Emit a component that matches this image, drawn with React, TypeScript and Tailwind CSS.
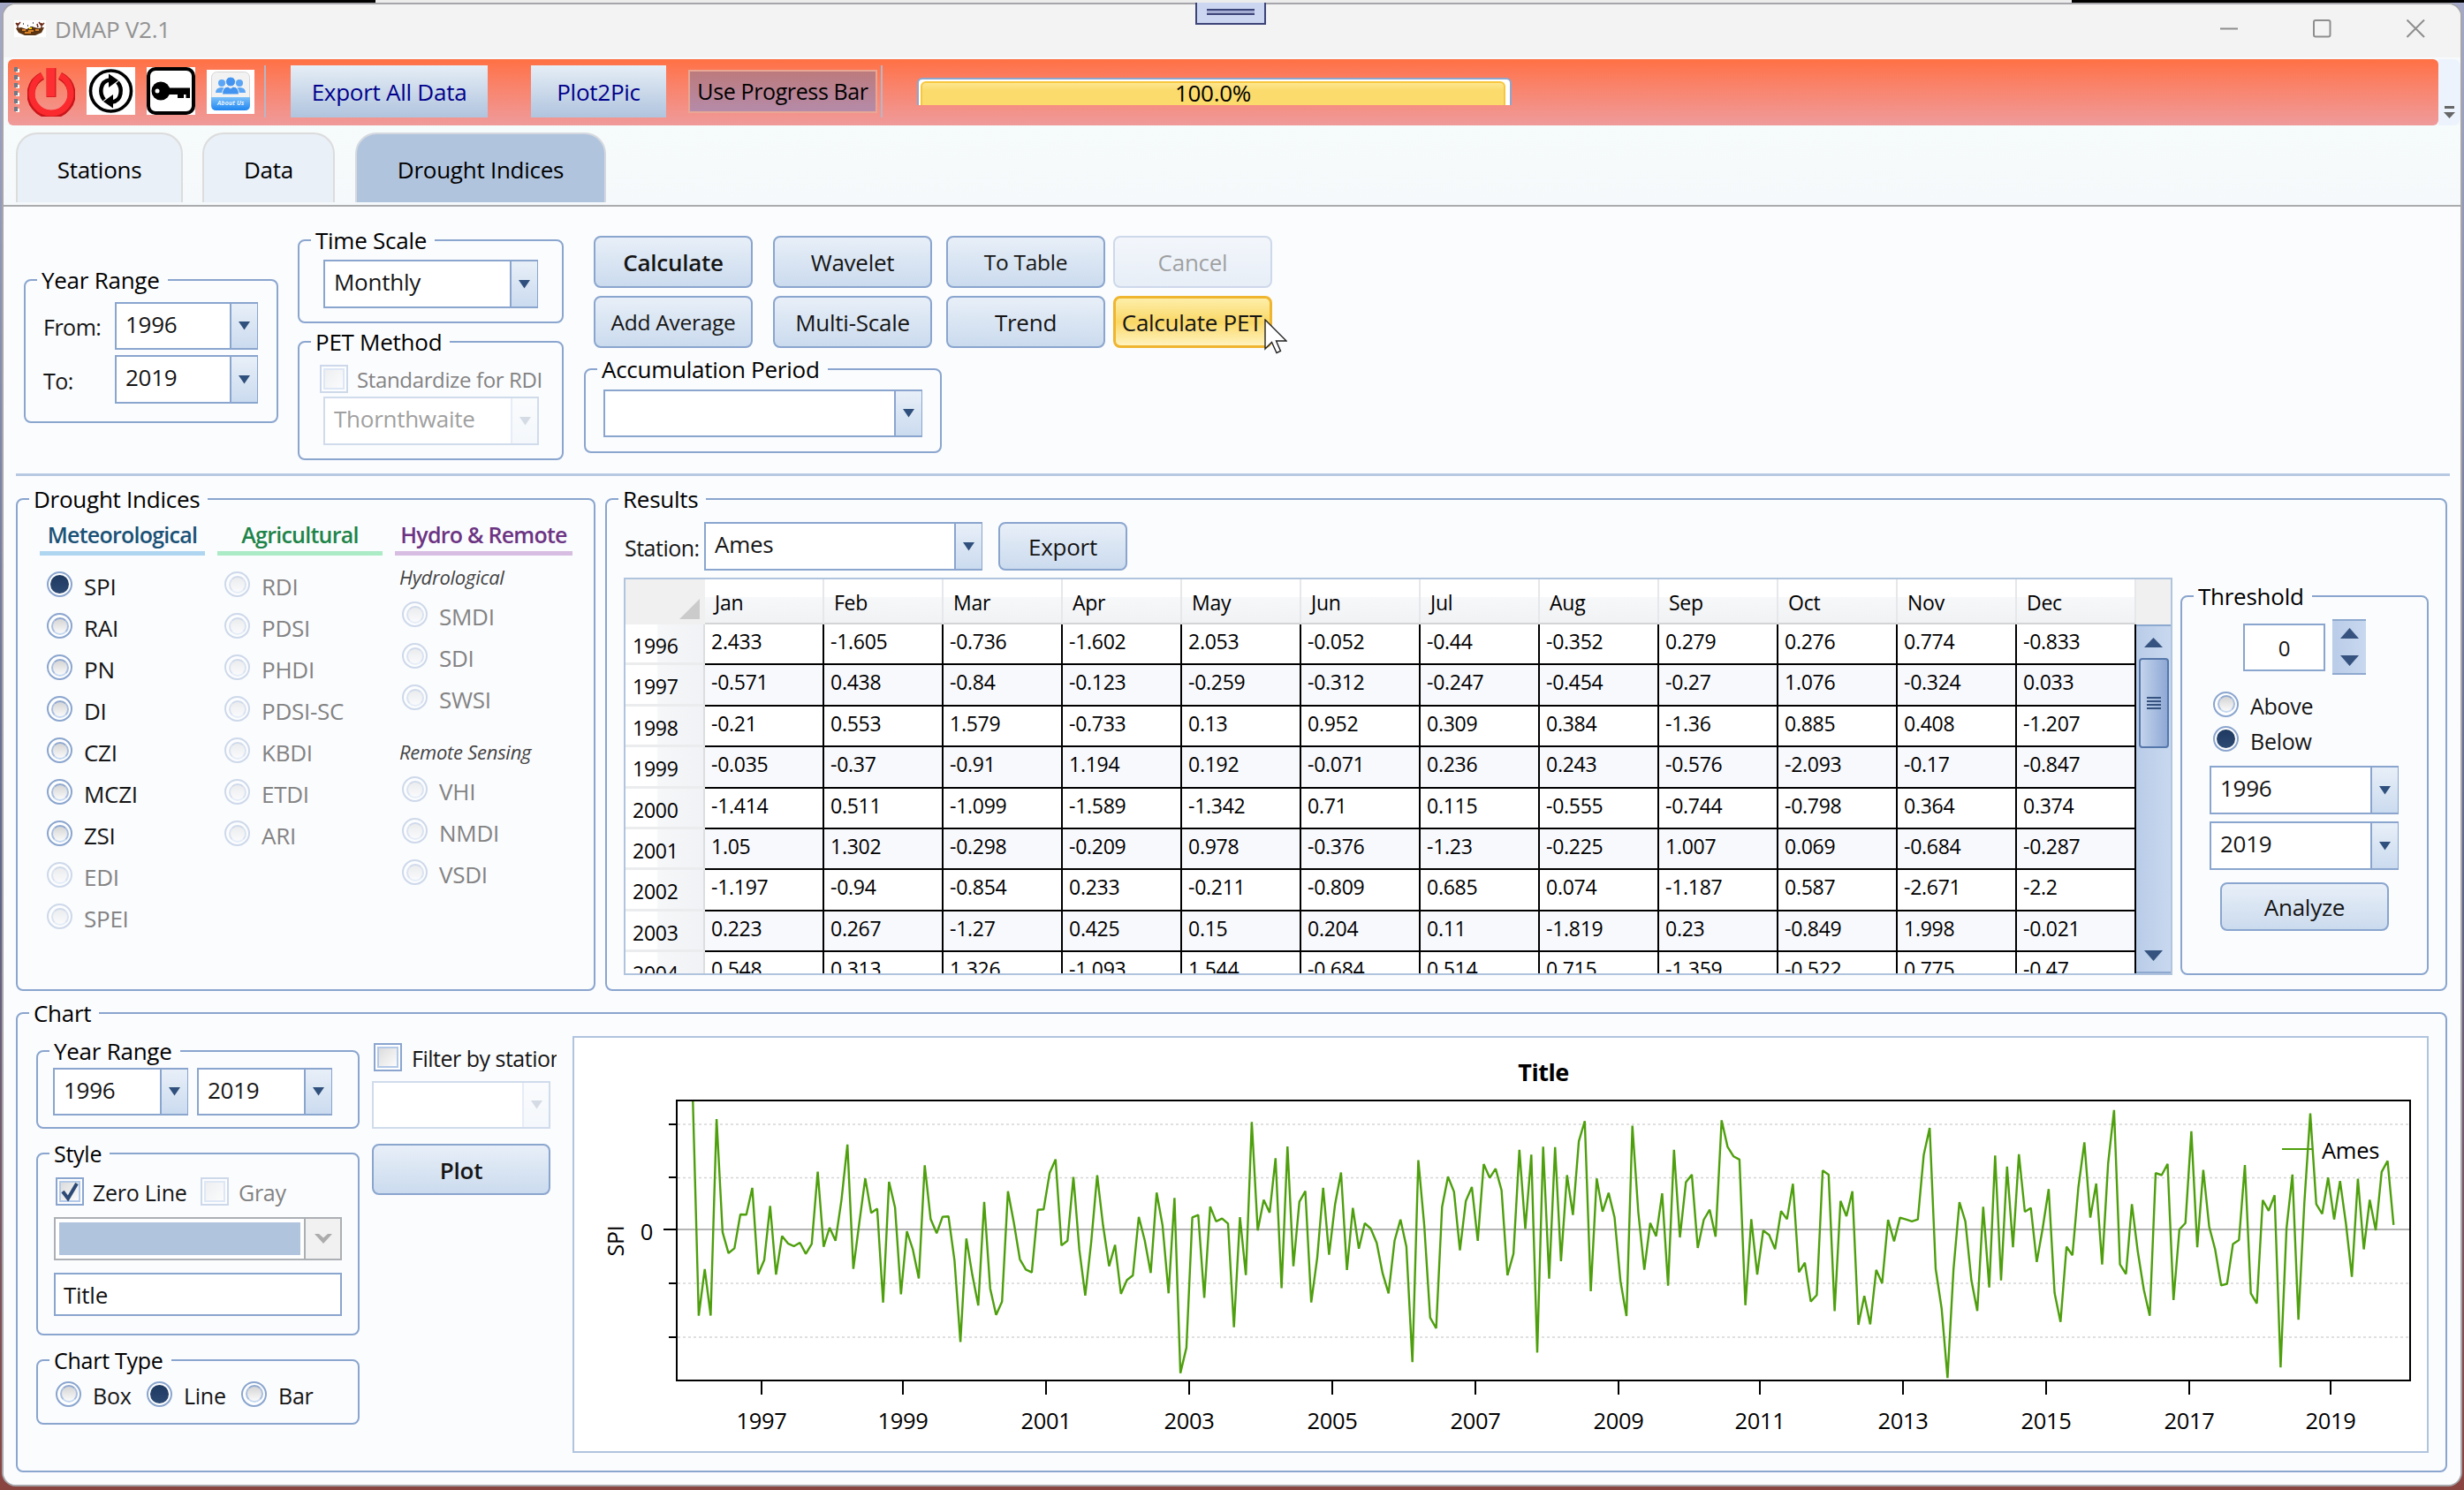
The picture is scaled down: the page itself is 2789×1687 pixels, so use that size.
import type { ReactNode } from 'react';

const months = ['Jan', 'Feb', 'Mar', 'Apr', 'May', 'Jun', 'Jul', 'Aug', 'Sep', 'Oct', 'Nov', 'Dec'];

const rows = [
    { year: 1996, values: [2.433, -1.605, -0.736, -1.602, 2.053, -0.052, -0.44, -0.352, 0.279, 0.276, 0.774, -0.833] },
    { year: 1997, values: [-0.571, 0.438, -0.84, -0.123, -0.259, -0.312, -0.247, -0.454, -0.27, 1.076, -0.324, 0.033] },
    { year: 1998, values: [-0.21, 0.553, 1.579, -0.733, 0.13, 0.952, 0.309, 0.384, -1.36, 0.885, 0.408, -1.207] },
    { year: 1999, values: [-0.035, -0.37, -0.91, 1.194, 0.192, -0.071, 0.236, 0.243, -0.576, -2.093, -0.17, -0.847] },
    { year: 2000, values: [-1.414, 0.511, -1.099, -1.589, -1.342, 0.71, 0.115, -0.555, -0.744, -0.798, 0.364, 0.374] },
    { year: 2001, values: [1.05, 1.302, -0.298, -0.209, 0.978, -0.376, -1.23, -0.225, 1.007, 0.069, -0.684, -0.287] },
    { year: 2002, values: [-1.197, -0.94, -0.854, 0.233, -0.211, -0.809, 0.685, 0.074, -1.187, 0.587, -2.671, -2.2] },
    { year: 2003, values: [0.223, 0.267, -1.27, 0.425, 0.15, 0.204, 0.11, -1.819, 0.23, -0.849, 1.998, -0.021] },
    { year: 2004, values: [0.548, 0.313, 1.326, -1.093, 1.544, -0.684, 0.514, 0.715, -1.359, -0.522, 0.775, -0.47] },
];

// 2005 onwards, only shown on the chart
const laterValues = [
    0.46, 1.06, -0.756, 0.4, -0.356, 0.115, 0.016, -0.25, -0.816, -1.19, -0.21, 0.186,
    -0.32, -2.47, 1.29, 0.08, -1.64, -1.84, 0.42, 0.98, 0.7, -0.39, 0.53, 0.79,
    -0.21, 1.216, 0.96, 1.13, 0.73, -0.854, -0.45, 1.48, 0.01, 1.39, -2.29, 1.54,
    -0.915, 1.53, -0.59, 1.01, 0.27, 1.64, 2.015, -1.15, 0.95, 0.33, 0.68, 0.225,
    -0.96, -1.61, 1.93, 0.32, -0.75, 0.12, -0.126, 0.67, -1.046, 1.48, -0.148, 0.88,
    1.02, -0.345, 0.18, 0.367, -0.137, 2.03, 1.54, 1.36, 1.3, -1.41, 0.19, -0.838,
    -0.02, -0.104, -0.367, 0.34, 0.19, 0.85, -0.794, -0.62, -1.34, -1.22, 1.095, 1.02,
    -1.52, 0.53, 0.247, 0.71, -1.775, -1.236, -1.764, -0.753, -1.0, 0.18, -0.22, 0.22,
    0.185, 0.15, 0.185, 1.39, 1.89, -0.736, -1.466, -2.764, -0.736, 0.51, 0.15, -0.944,
    -1.517, 0.42, -1.08, 1.376, -0.95, 1.17, -0.33, 1.4, 0.33, 0.4, -0.607, 0.02,
    0.753, -1.185, -1.72, -0.32, -0.48, 0.78, 1.62, 0.22, 0.854, -0.65, 1.23, 2.22,
    -0.65, -0.83, 0.47, -0.416, -1.12, -1.607, 1.05, 1.01, 1.22, -1.315, 0, 0.12,
    1.826, -0.33, 1.107, 0.05, -0.37, -1.04, -1.01, -0.27, -0.197, 1.197, -1.19, -1.376,
    0.545, 0.348, 0.635, -2.567, 0.02, 1.02, -1.68, 0.5, 2.157, 0.47, 0.29, 0.966,
    0.185, 0.9, 0.107, -0.88, 0.944, -0.37, 0.55, -0.017, 1.07, 1.275, 0.084,
];

const series = [...rows.flatMap((r) => r.values), ...laterValues];

const xTicks = [
    { year: 1997, x: 862 },
    { year: 1999, x: 1022 },
    { year: 2001, x: 1184 },
    { year: 2003, x: 1346 },
    { year: 2005, x: 1508 },
    { year: 2007, x: 1670 },
    { year: 2009, x: 1832 },
    { year: 2011, x: 1992 },
    { year: 2013, x: 2154 },
    { year: 2015, x: 2316 },
    { year: 2017, x: 2478 },
    { year: 2019, x: 2638 },
];

const meteorological = ['SPI', 'RAI', 'PN', 'DI', 'CZI', 'MCZI', 'ZSI', 'EDI', 'SPEI'];
const agricultural = ['RDI', 'PDSI', 'PHDI', 'PDSI-SC', 'KBDI', 'ETDI', 'ARI'];

function Group({ title, className, children }: { title: string; className: string; children: ReactNode }) {
    return (
        <div className={`relative shrink-0 rounded-lg border-2 border-[#8aa5ce] ${className}`}>
            <div className="absolute -top-[18px] left-[13px] bg-[#fbfcfe] pl-[5px] pr-[9px] h-[34px] leading-[34px] whitespace-nowrap text-black">
                {title}
            </div>
            {children}
        </div>
    );
}

function Combo({ value, className, disabled }: { value?: string; className: string; disabled?: boolean }) {
    return (
        <div className={`flex shrink-0 border-2 bg-white ${disabled ? 'border-[#d0dbeb] text-[#a0a0a0]' : 'border-[#8aa5ce]'} ${className}`}>
            <div className="flex-1 pl-[10px] leading-[46px] whitespace-nowrap">{value}</div>
            <div className={`w-[31px] -mr-[1px] flex items-center justify-center border-l-2 border-[#8aa5ce] bg-linear-to-b from-[#e8eff8] to-[#cbdbef] ${disabled ? 'opacity-20' : ''}`}>
                <svg width="13" height="10" viewBox="0 0 13 10">
                    <path d="M0 0H13L6.5 9.5Z" fill="#2f4f7c" />
                </svg>
            </div>
        </div>
    );
}

function Button({ children, className }: { children: ReactNode; className: string }) {
    return (
        <div className={`flex shrink-0 items-center justify-center rounded-lg border-2 border-[#8aa5ce] bg-linear-to-b from-[#e8eff8] to-[#cbdbee] pt-[2px] whitespace-nowrap ${className}`}>
            {children}
        </div>
    );
}

function RadioDot({ checked, disabled }: { checked?: boolean; disabled?: boolean }) {
    return (
        <span className={`flex size-[29px] shrink-0 items-center justify-center rounded-full border-2 border-[#8aa5ce] bg-white ${disabled ? 'opacity-40' : ''}`}>
            {checked ? (
                <span className="size-[21px] rounded-full bg-linear-to-b from-[#1f3a61] to-[#2d4a73]" />
            ) : (
                <span className="size-[20px] rounded-full border-2 border-t-[#8fa8d0] border-x-[#a9bee0] border-b-[#c5d8f0] bg-linear-to-b from-[#d5d5d5] to-[#fafafa]" />
            )}
        </span>
    );
}

function Radio({ label, checked, disabled, className }: { label: string; checked?: boolean; disabled?: boolean; className: string }) {
    return (
        <div className={`flex items-center gap-[13px] ${className}`}>
            <RadioDot checked={checked} disabled={disabled} />
            <span className={`pt-[4px] leading-[32px] whitespace-nowrap ${disabled ? 'text-[#838383]' : ''}`}>{label}</span>
        </div>
    );
}

function CheckBox({ checked, disabled }: { checked?: boolean; disabled?: boolean }) {
    return (
        <span className={`flex size-[32px] shrink-0 items-center justify-center border-2 border-[#8aa5ce] bg-white ${disabled ? 'opacity-40' : ''}`}>
            <span className="flex size-[24px] items-center justify-center border-2 border-[#b3c9e8] bg-linear-to-br from-[#dcdcdc] to-[#fcfcfc]">
                {checked && (
                    <svg width="20" height="22" viewBox="0 0 20 22" className="shrink-0">
                        <path d="M2 11L8 19L18 2" fill="none" stroke="#2c4a75" strokeWidth="4" />
                    </svg>
                )}
            </span>
        </span>
    );
}

function PowerIcon() {
    return (
        <svg width="54" height="56" viewBox="0 0 54 56">
            <path d="M17 10A23 23 0 1 0 37 10" fill="none" stroke="#c9161b" strokeWidth="9" />
            <path d="M17 9.500A22 22.500 0 1 0 37 9.500" fill="none" stroke="#fb2a2e" strokeWidth="7" />
            <rect x="21.500" y="1" width="11" height="33" fill="#d81e22" />
            <rect x="22" y="1" width="9" height="32" fill="#fd2f32" />
        </svg>
    );
}

function RefreshIcon() {
    return (
        <svg width="55" height="54" viewBox="0 0 55 54" className="bg-white">
            <circle cx="27.500" cy="27" r="23" fill="none" stroke="#000" strokeWidth="3.600" />
            <path d="M20 37C14 30 15 16 26 14.500" fill="none" stroke="#000" strokeWidth="4.500" />
            <path d="M25 7.500L36 15L25 23Z" fill="#000" />
            <path d="M35 17C41 24 40 38 29 39.500" fill="none" stroke="#000" strokeWidth="4.500" />
            <path d="M30 31L19 39L30 46.500Z" fill="#000" />
        </svg>
    );
}

function KeyIcon() {
    return (
        <svg width="55" height="54" viewBox="0 0 55 54" className="bg-white">
            <rect x="2" y="2" width="51" height="50" rx="8" fill="#fff" stroke="#000" strokeWidth="4" />
            <circle cx="16" cy="27" r="10.500" fill="#000" />
            <circle cx="12" cy="27" r="2.500" fill="#fff" />
            <path d="M24 23.500H49V35H44.500V31H42V35H35V31H24Z" fill="#000" />
        </svg>
    );
}

function AboutIcon() {
    return (
        <svg width="54" height="50" viewBox="0 0 54 50" className="bg-white">
            <defs>
                <linearGradient id="about" x1="0" y1="0" x2="0" y2="1">
                    <stop offset="0" stopColor="#7cc0fa" />
                    <stop offset="1" stopColor="#1f86f0" />
                </linearGradient>
            </defs>
            <rect x="5.500" y="2.500" width="43" height="43" rx="6" fill="#f2f2f2" stroke="#d5d5d5" />
            <path d="M5 31H49V40Q49 46 43 46H11Q5 46 5 40Z" fill="url(#about)" />
            <g fill="#5aa5f5">
                <circle cx="17" cy="15" r="4" />
                <path d="M10 26Q10 20 17 20Q22 20 22 26Z" />
                <circle cx="37" cy="15" r="4" />
                <path d="M32 26Q32 20 37 20Q44 20 44 26Z" />
            </g>
            <g fill="#4394f0" stroke="#f2f2f2" strokeWidth="1">
                <path d="M17.500 28Q17.500 19.500 24 19L27 21L30 19Q36.500 19.500 36.500 28Z" />
                <circle cx="27" cy="13.500" r="5.500" />
            </g>
            <text x="27" y="40" textAnchor="middle" fontSize="7" fontStyle="italic" fontWeight="600" fill="#fff" textLength="30">About Us</text>
        </svg>
    );
}

function TitleBar() {
    return (
        <div className="flex h-[60px] shrink-0 bg-[#f3f3f3] text-[#929292]">
            <svg width="36" height="19" viewBox="0 0 36 19" className="ml-[12px] mt-[18px] bg-white">
                <path d="M2 9L8 8L14 10L20 7L27 9L34 8L31 14L24 17H12L5 14Z" fill="#5b3414" />
                <path d="M9 11H13M16 12H22M24 11H28M12 14H19" stroke="#d98326" strokeWidth="2" />
                <path d="M4 9V3M2 3L4 6L7 2M31 9V3M28 2L31 6L34 3M27 8L26 4" stroke="#6d2a1a" strokeWidth="1.500" fill="none" />
                <path d="M10 4H11M15 6H16M21 3H22M18 8H21" stroke="#333" strokeWidth="1.500" />
                <path d="M17 9H20" stroke="#ffd400" strokeWidth="2" />
            </svg>
            <div className="ml-[10px] mt-[10px] leading-[36px]">DMAP V2.1</div>
            <div className="ml-auto mr-[40px] mt-[17px] flex gap-[85px]">
                <svg width="21" height="21" viewBox="0 0 21 21"><path d="M1 10.500H21" stroke="#8e8e8e" strokeWidth="2" /></svg>
                <svg width="21" height="21" viewBox="0 0 21 21"><rect x="1" y="1" width="18.500" height="18.500" rx="2" fill="none" stroke="#8e8e8e" strokeWidth="2" /></svg>
                <svg width="21" height="21" viewBox="0 0 21 21"><path d="M0.500 0.500L20 20M20 0.500L0.500 20" stroke="#8e8e8e" strokeWidth="2" /></svg>
            </div>
        </div>
    );
}

function Toolbar() {
    return (
        <div className="flex h-[77px] shrink-0 pt-[2px] pl-[5px]">
            <div className="flex h-[75px] w-[2751px] shrink-0 rounded-md bg-linear-to-b from-[#ff7043] to-[#ef9a9a]">
                <svg width="7" height="54" viewBox="0 0 7 54" className="ml-[7px] mt-[9px]">
                    {[0, 9, 18, 27, 36, 45].map((y) => (
                        <g key={y}>
                            <rect x="2" y={y + 2} width="4" height="4" fill="#fff" />
                            <rect x="0" y={y} width="4" height="5" fill="#6f7a86" />
                        </g>
                    ))}
                </svg>
                <div className="ml-[8px] mt-[9px]"><PowerIcon /></div>
                <div className="ml-[13px] mt-[9px]"><RefreshIcon /></div>
                <div className="ml-[13px] mt-[9px]"><KeyIcon /></div>
                <div className="ml-[13px] mt-[12px]"><AboutIcon /></div>
                <div className="ml-[11px] mt-[7px] h-[59px] w-[2px] bg-[#b9b5c4]" />
                <div className="ml-[28px] mt-[7px] h-[59px] w-[223px] bg-linear-to-b from-[#e6eef6] to-[#b0c4de] text-center leading-[60px] text-[#00008b]">Export All Data</div>
                <div className="ml-[49px] mt-[7px] h-[59px] w-[153px] bg-linear-to-b from-[#e6eef6] to-[#b0c4de] text-center leading-[60px] text-[#00008b]">Plot2Pic</div>
                <div className="ml-[25px] mt-[12px] flex h-[49px] w-[214px] items-center justify-center border-2 border-[#e8a795] bg-linear-to-b from-[#bc7a7c] to-[#b58ba9] text-[25px] tracking-[-0.015em] whitespace-nowrap text-black">Use Progress Bar</div>
                <div className="ml-[4px] mt-[7px] h-[59px] w-[2px] bg-[#b9b5c4]" />
                <div className="ml-[39px] mt-[21px] h-[31px] w-[673px] overflow-hidden rounded-t-md border-2 border-b-0 border-[#8ea5cc] bg-white pt-[2px] pl-[2px]">
                    <div className="h-[30px] w-[662px] rounded-t-md border-2 border-b-0 border-[#f8c73e] bg-linear-to-b from-[#fde68f] via-[#fadb6c] via-30% to-[#fadb6c] text-center leading-[22px] text-black">100.0%</div>
                </div>
            </div>
            <div className="flex h-[75px] flex-1 items-end justify-center rounded-r-lg bg-[#edf3fd] pb-[7px]">
                <svg width="13" height="15" viewBox="0 0 13 15">
                    <path d="M1 0H12V3H1ZM0 7H13L6.500 14Z" fill="#666" />
                </svg>
            </div>
        </div>
    );
}

function Tabs() {
    return (
        <div className="flex h-[92px] shrink-0 items-end border-b-2 border-[#a9abac] bg-linear-to-b from-[#f6fbfb] to-[#f6f9fb] pb-[3px] pl-[14px] text-center leading-[80px] text-black">
            <div className="h-[79px] w-[189px] rounded-t-3xl border-2 border-b-0 border-[#dcdcdc] bg-[#e9f0f8]">Stations</div>
            <div className="ml-[22px] h-[79px] w-[150px] rounded-t-3xl border-2 border-b-0 border-[#dcdcdc] bg-[#e9f0f8]">Data</div>
            <div className="ml-[23px] h-[79px] w-[284px] rounded-t-3xl border-2 border-b-0 border-[#d5d9df] bg-[#b0c4de]">Drought Indices</div>
        </div>
    );
}

function Options() {
    return (
        <div className="flex h-[305px] shrink-0 items-start border-b-[3px] border-[#b7c8e2]">
            <Group title="Year Range" className="ml-[9px] mt-[82px] h-[163px] w-[288px] pl-[20px] pt-[24px]">
                <div className="flex h-[54px]">
                    <span className="w-[81px] text-[25px] leading-[57px] tracking-[-0.02em]">From:</span>
                    <Combo value="1996" className="h-[54px] w-[162px]" />
                </div>
                <div className="mt-[6px] flex h-[55px]">
                    <span className="w-[81px] text-[25px] leading-[58px] tracking-[-0.02em]">To:</span>
                    <Combo value="2019" className="h-[55px] w-[162px]" />
                </div>
            </Group>
            <div className="ml-[22px] mt-[37px]">
                <Group title="Time Scale" className="h-[95px] w-[301px] pl-[27px] pt-[21px]">
                    <Combo value="Monthly" className="h-[55px] w-[243px]" />
                </Group>
                <Group title="PET Method" className="mt-[20px] h-[135px] w-[301px] pl-[23px] pt-[25px]">
                    <div className="flex items-center gap-[10px]">
                        <CheckBox disabled />
                        <span className="pt-[2px] text-[24px] leading-[30px] tracking-[-0.015em] whitespace-nowrap text-[#838383]">Standardize for RDI</span>
                    </div>
                    <Combo value="Thornthwaite" disabled className="ml-[4px] mt-[4px] h-[55px] w-[244px]" />
                </Group>
            </div>
            <div className="ml-[23px] mt-[33px]">
                <div className="ml-[11px] flex">
                    <Button className="h-[59px] w-[180px] font-semibold">Calculate</Button>
                    <Button className="ml-[23px] h-[59px] w-[180px]">Wavelet</Button>
                    <Button className="ml-[16px] h-[59px] w-[180px] text-[24.500px]">To Table</Button>
                    <Button className="ml-[9px] h-[59px] w-[180px] opacity-40">Cancel</Button>
                </div>
                <div className="ml-[11px] mt-[9px] flex">
                    <Button className="h-[59px] w-[180px] text-[24.500px]">Add Average</Button>
                    <Button className="ml-[23px] h-[59px] w-[180px]">Multi-Scale</Button>
                    <Button className="ml-[16px] h-[59px] w-[180px]">Trend</Button>
                    <div className="relative ml-[9px] flex h-[59px] w-[180px] items-center justify-center rounded-lg border-[3px] border-[#efb52f] bg-linear-to-b from-[#fdeea8] via-[#fad865] via-50% to-[#fff3bd] pt-[2px] pr-[2px] whitespace-nowrap">
                        Calculate PET
                        <svg width="26" height="40" viewBox="0 0 26 40" className="absolute -right-[20px] top-[23px]">
                            <path d="M1 1V34L8.500 26.500L14 38.500L18.500 36.500L13.500 25H25Z" fill="#fff" stroke="#222" strokeWidth="1.400" />
                        </svg>
                    </div>
                </div>
                <Group title="Accumulation Period" className="mt-[23px] h-[96px] w-[405px] pl-[20px] pt-[22px]">
                    <Combo className="h-[54px] w-[361px]" />
                </Group>
            </div>
        </div>
    );
}

function DroughtIndices() {
    return (
        <Group title="Drought Indices" className="flex h-[558px] w-[656px] gap-[14px] pl-[25px] pt-[22px]">
            <div className="w-[187px]">
                <div className="mb-[9px] h-[41px] border-b-[5px] border-[#aed6f1] text-center text-[25px] font-semibold leading-[34px] tracking-[-0.03em] text-[#1a5276]">Meteorological</div>
                {meteorological.map((name, i) => (
                    <Radio key={name} label={name} checked={i === 0} disabled={i > 6} className="h-[47px] pl-[8px]" />
                ))}
            </div>
            <div className="w-[187px]">
                <div className="mb-[9px] h-[41px] border-b-[5px] border-[#abebc6] text-center text-[25px] font-semibold leading-[34px] tracking-[-0.03em] text-[#1e8449]">Agricultural</div>
                {agricultural.map((name) => (
                    <Radio key={name} label={name} disabled className="h-[47px] pl-[8px]" />
                ))}
            </div>
            <div className="w-[201px]">
                <div className="h-[41px] border-b-[5px] border-[#d7bde2] text-center text-[25px] font-semibold leading-[34px] tracking-[-0.03em] whitespace-nowrap text-[#6c3483]">Hydro &amp; Remote</div>
                <div className="mt-[8px] h-[35px] pl-[5px] text-[22px] italic leading-[32px] text-[#444]">Hydrological</div>
                {['SMDI', 'SDI', 'SWSI'].map((name) => (
                    <Radio key={name} label={name} disabled className="h-[47px] pl-[8px]" />
                ))}
                <div className="mt-[22px] h-[35px] pl-[5px] text-[22px] italic leading-[32px] text-[#444]">Remote Sensing</div>
                {['VHI', 'NMDI', 'VSDI'].map((name) => (
                    <Radio key={name} label={name} disabled className="h-[47px] pl-[8px]" />
                ))}
            </div>
        </Group>
    );
}

function ResultsTable() {
    return (
        <div className="flex h-[450px] w-[1753px] shrink-0 overflow-hidden border-2 border-[#b0c4de] bg-white text-[23px] text-black">
            <div className="w-[1710px] shrink-0">
                <div className="flex h-[51px]">
                    <div className="flex w-[90px] items-end justify-end bg-[#f0f0f0] pr-[6px] pb-[6px]">
                        <svg width="23" height="23" viewBox="0 0 23 23"><path d="M23 0V23H0Z" fill="#cbcbcb" /></svg>
                    </div>
                    {months.map((m) => (
                        <div key={m} className="w-[135px] border-r-2 border-b-2 border-r-[#e6e7ea] border-b-[#d3d4d6] bg-linear-to-b from-white from-40% via-[#f7f8fa] via-41% to-[#f1f2f4] pl-[11px] leading-[53px]">
                            {m}
                        </div>
                    ))}
                </div>
                {rows.map((row, r) => (
                    <div key={row.year} className="flex h-[46.400px]">
                        <div className="w-[90px] border-r-2 border-b-[3px] border-r-[#dcdddf] border-b-[#ebecee] bg-linear-to-r from-white from-40% via-[#f6f7f9] via-42% to-[#f1f2f5] pl-[8px] leading-[49px]">
                            {row.year}
                        </div>
                        {row.values.map((v, i) => (
                            <div key={i} className={`w-[135px] border-r-2 border-b-2 border-black pl-[7px] leading-[39px] ${r % 2 ? 'bg-[#f8f9fd]' : 'bg-white'}`}>
                                {v}
                            </div>
                        ))}
                    </div>
                ))}
            </div>
            <div className="flex flex-1 flex-col bg-[#f0f0f0]">
                <div className="mt-[51px] flex flex-1 flex-col items-center border-y-2 border-[#8ea9cf] bg-linear-to-r from-[#b9cce8] to-[#c8d8ef]">
                    <svg width="21" height="11" viewBox="0 0 21 11" className="mt-[13px]"><path d="M0 11H21L10.500 0Z" fill="#36537f" /></svg>
                    <div className="mt-[12px] flex h-[102px] w-[34px] flex-col items-center justify-center gap-[2px] rounded border-2 border-[#5677aa] bg-linear-to-r from-[#c3d3ec] to-[#8fa9d5]">
                        <div className="h-[2px] w-[16px] bg-[#36537f]" />
                        <div className="h-[2px] w-[16px] bg-[#36537f]" />
                        <div className="h-[2px] w-[16px] bg-[#36537f]" />
                        <div className="h-[2px] w-[16px] bg-[#36537f]" />
                    </div>
                    <svg width="21" height="12" viewBox="0 0 21 12" className="mt-auto mb-[12px]"><path d="M0 0H21L10.500 12Z" fill="#36537f" /></svg>
                </div>
            </div>
        </div>
    );
}

function Threshold() {
    return (
        <Group title="Threshold" className="ml-[9px] mt-[20px] h-[430px] w-[281px] pt-[25px]">
            <div className="flex pl-[69px]">
                <div className="mt-[5px] h-[54px] w-[93px] border-2 border-[#8aa5ce] bg-white text-center text-[24px] leading-[52px]">0</div>
                <div className="ml-[8px] flex h-[63px] w-[38px] flex-col items-center justify-between border-y-2 border-[#8ea9cf] bg-linear-to-r from-[#b9cce8] to-[#c8d8ef] py-[8px]">
                    <svg width="21" height="12" viewBox="0 0 21 12"><path d="M0 12H21L10.500 0Z" fill="#36537f" /></svg>
                    <svg width="21" height="12" viewBox="0 0 21 12"><path d="M0 0H21L10.500 12Z" fill="#36537f" /></svg>
                </div>
            </div>
            <div className="mt-[13px] pl-[35px] text-[25px]">
                <Radio label="Above" className="h-[40px]" />
                <Radio label="Below" checked className="h-[39px]" />
            </div>
            <div className="mt-[11px] pl-[31px]">
                <Combo value="1996" className="h-[55px] w-[214px]" />
                <Combo value="2019" className="mt-[8px] h-[55px] w-[214px]" />
                <Button className="ml-[12px] mt-[14px] h-[55px] w-[191px]">Analyze</Button>
            </div>
        </Group>
    );
}

function ChartSettings() {
    return (
        <div className="w-[366px] pt-[41px]">
            <Group title="Year Range" className="flex h-[89px] w-[366px] gap-[10px] pl-[17px] pt-[18px]">
                <Combo value="1996" className="h-[54px] w-[153px]" />
                <Combo value="2019" className="h-[54px] w-[153px]" />
            </Group>
            <Group title="Style" className="mt-[27px] h-[207px] w-[366px] pl-[18px] pt-[26px] text-[25px]">
                <div className="flex items-center pl-[2px]">
                    <CheckBox checked />
                    <span className="ml-[10px] w-[122px] pt-[1px] leading-[30px] whitespace-nowrap">Zero Line</span>
                    <CheckBox disabled />
                    <span className="ml-[11px] pt-[1px] leading-[30px] text-[#838383]">Gray</span>
                </div>
                <div className="mt-[13px] flex h-[49px] w-[326px] border-2 border-[#acafb4] bg-white">
                    <div className="m-[4px] flex-1 bg-[#b0c4de]" />
                    <div className="flex w-[41px] items-center justify-center border-l-2 border-[#acafb4] bg-[#f1f1f1]">
                        <svg width="20" height="11" viewBox="0 0 20 11"><path d="M0 0H5L10 4.500L15 0H20L10 11Z" fill="#acacac" /></svg>
                    </div>
                </div>
                <div className="mt-[14px] h-[49px] w-[326px] border-2 border-[#8aa5ce] bg-white pl-[9px] text-[26px] leading-[46px]">Title</div>
            </Group>
            <Group title="Chart Type" className="mt-[27px] flex h-[74px] w-[366px] pl-[20px] pt-[19px] text-[25px]">
                <Radio label="Box" className="h-[36px] w-[103px]" />
                <Radio label="Line" checked className="h-[36px] w-[107px]" />
                <Radio label="Bar" className="h-[36px]" />
            </Group>
        </div>
    );
}

function Plot() {
    const points = series.map((v, i) => `${(784.2 + i * 6.731).toFixed(1)},${(1393 - v * 60.87).toFixed(1)}`).join(' ');
    return (
        <div className="ml-[18px] mt-[25px] h-[472px] w-[2101px] shrink-0 border-2 border-[#b0c4de] bg-white">
            <svg width="2097" height="468" viewBox="650 1176 2097 468" fill="#000" fontSize="25.500">
                <clipPath id="plot-area"><rect x="766" y="1248" width="1962" height="316" /></clipPath>
                <path d="M767 1274H2728M767 1334.500H2728M767 1454H2728M767 1515H2728" stroke="#d6d6d6" strokeWidth="1.600" strokeDasharray="3 3" fill="none" />
                <path d="M767 1393H2728" stroke="#b5b5b5" strokeWidth="2" />
                <polyline points={points} fill="none" stroke="#4e9f0d" strokeWidth="2.400" strokeLinejoin="bevel" clipPath="url(#plot-area)" />
                <rect x="766" y="1247" width="1962" height="317" fill="none" stroke="#000" strokeWidth="2" />
                <path d="M757 1274H766M757 1334H766M751 1393H766M757 1454H766M757 1515H766" stroke="#000" strokeWidth="2" />
                {xTicks.map((t) => (
                    <g key={t.year}>
                        <path d={`M${t.x} 1564V1580`} stroke="#000" strokeWidth="2" />
                        <text x={t.x} y="1619" textAnchor="middle" letterSpacing="-0.300">{t.year}</text>
                    </g>
                ))}
                <text x="732" y="1405" textAnchor="middle">0</text>
                <text x="706" y="1406" textAnchor="middle" fontSize="25" transform="rotate(-90 706 1406)">SPI</text>
                <text x="1747" y="1225" textAnchor="middle" fontSize="27" fontWeight="700" letterSpacing="-0.500">Title</text>
                <path d="M2583 1302H2618" stroke="#4e9f0d" strokeWidth="2" />
                <text x="2628" y="1313" letterSpacing="-0.300">Ames</text>
            </svg>
        </div>
    );
}

export default function App() {
    return (
        <div className="relative h-[1687px] w-[2789px] overflow-hidden bg-linear-to-b from-[#a5a9c8] via-[#5d6488] via-60% to-[#8a4440] pt-[3px] pl-[2px] font-['Open_Sans','Noto_Sans',sans-serif] text-[26px] tracking-[-0.01em] text-[#151515]">
            <div className="absolute left-0 top-0 h-[3px] w-[425px] bg-black" />
            <div className="absolute left-[425px] top-0 h-[3px] w-[1920px] bg-[#ececec]" />
            <div className="absolute right-0 top-0 h-[3px] w-[444px] bg-black" />
            <div className="flex h-[1680px] w-[2785px] flex-col overflow-hidden rounded-2xl border-2 border-[#a6a6aa] bg-[#f6fafb]">
                <TitleBar />
                <Toolbar />
                <Tabs />
                <div className="flex flex-1 flex-col bg-[#fbfcfe] pr-[12px] pl-[14px]">
                    <Options />
                    <div className="mt-[25px] flex">
                        <DroughtIndices />
                        <Group title="Results" className="ml-[11px] h-[558px] w-[2085px] pl-[19px] pt-[25px]">
                            <div className="flex h-[55px] pl-[1px]">
                                <span className="w-[90px] text-[25px] leading-[59px] tracking-[-0.02em]">Station:</span>
                                <Combo value="Ames" className="h-[55px] w-[315px]" />
                                <Button className="ml-[18px] h-[55px] w-[146px]">Export</Button>
                            </div>
                            <div className="mt-[8px] flex items-start">
                                <ResultsTable />
                                <Threshold />
                            </div>
                        </Group>
                    </div>
                    <Group title="Chart" className="mt-[24px] flex h-[521px] w-[2752px] pl-[21px]">
                        <ChartSettings />
                        <div className="ml-[14px] w-[209px] pt-[33px]">
                            <div className="flex items-center gap-[11px] overflow-hidden pl-[2px]">
                                <CheckBox />
                                <span className="pt-[3px] text-[25px] leading-[29px] tracking-[-0.02em] whitespace-nowrap">Filter by station</span>
                            </div>
                            <Combo disabled className="mt-[11px] h-[54px] w-[202px]" />
                            <Button className="mt-[17px] h-[58px] w-[202px] font-semibold">Plot</Button>
                        </div>
                        <Plot />
                    </Group>
                </div>
            </div>
            {/* Docked handle at the top edge of the window */}
            <div className="absolute left-[1353px] top-[3px] flex h-[25px] w-[80px] flex-col items-center border-2 border-t-0 border-[#3c4479] bg-[#ccd6f0] pt-[7px]">
                <div className="h-[7px] w-[54px] border-y-2 border-[#3c4479] bg-[#a5aed2]" />
            </div>
        </div>
    );
}
